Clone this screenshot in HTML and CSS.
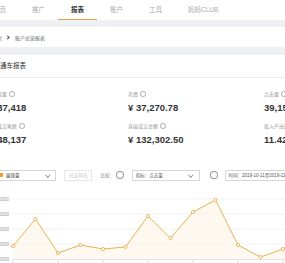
FILE: index.html
```html
<!DOCTYPE html>
<html lang="zh-CN">
<head>
    <meta charset="UTF-8">
    <title>直通车报表</title>
    <link rel="stylesheet" href="styles.css">
</head>
<body>
    <div class="nav">
        <ul class="nav-list">
            <li class="nav-item">首页</li>
            <li class="nav-item">推广</li>
            <li class="nav-item active">报表</li>
            <li class="nav-item">账户</li>
            <li class="nav-item">工具</li>
            <li class="nav-item">妈妈CLUB</li>
        </ul>
    </div>

    <div class="crumb">
        <div class="crumb-inner">
            <span class="crumb-home">首页</span>
            <span class="crumb-arrow"></span>
            <span class="crumb-cur">账户总览报表</span>
        </div>
    </div>

    <div class="card">
        <div class="card-title"><span>直通车报表</span></div>
        <div class="card-body">
            <div class="metrics">
                <div class="metric">
                    <div class="m-label">展现量<i class="tip"></i></div>
                    <div class="m-value">137,418</div>
                </div>
                <div class="metric">
                    <div class="m-label">花费<i class="tip"></i></div>
                    <div class="m-value">¥ 37,270.78</div>
                </div>
                <div class="metric">
                    <div class="m-label">点击量<i class="tip"></i></div>
                    <div class="m-value">39,158</div>
                </div>
                <div class="metric">
                    <div class="m-label">总成交笔数<i class="tip"></i></div>
                    <div class="m-value">148,137</div>
                </div>
                <div class="metric">
                    <div class="m-label">直接成交金额<i class="tip"></i></div>
                    <div class="m-value">¥ 132,302.50</div>
                </div>
                <div class="metric">
                    <div class="m-label">投入产出比<i class="tip"></i></div>
                    <div class="m-value">11.42</div>
                </div>
            </div>

            <div class="controls">
                <div class="select sel-metric">
                    <span class="dot"></span>
                    <span class="sel-text">展现量</span>
                    <span class="caret"></span>
                </div>
                <div class="btn">过去30天</div>
                <span class="ctl-label">比较：</span>
                <span class="radio"></span>
                <div class="select sel-index">
                    <span class="sel-text">指标：点击量</span>
                    <span class="caret"></span>
                </div>
                <span class="radio radio-2"></span>
                <div class="select sel-date">
                    <span class="sel-text">时间：2019-10-11至2019-11-09</span>
                </div>
            </div>

            <svg class="chart" width="320" height="75" viewBox="-8 188 320 75">
                <g class="grid">
                    <line x1="12" y1="198" x2="320" y2="198" />
                    <line x1="12" y1="213" x2="320" y2="213" />
                    <line x1="12" y1="228" x2="320" y2="228" />
                    <line x1="12" y1="243" x2="320" y2="243" />
                    <line x1="12" y1="258.5" x2="320" y2="258.5" class="axis" />
                </g>
                <g class="ticks">
                    <line x1="13" y1="259" x2="13" y2="263" />
                    <line x1="58" y1="259" x2="58" y2="263" />
                    <line x1="103" y1="259" x2="103" y2="263" />
                    <line x1="148" y1="259" x2="148" y2="263" />
                    <line x1="193" y1="259" x2="193" y2="263" />
                    <line x1="238" y1="259" x2="238" y2="263" />
                    <line x1="283" y1="259" x2="283" y2="263" />
                </g>
                <g class="ylabels">
                    <text x="9" y="199.6">50000</text>
                    <text x="9" y="214.6">40000</text>
                    <text x="9" y="229.6">30000</text>
                    <text x="9" y="244.6">20000</text>
                    <text x="9" y="260">10000</text>
                </g>
                <polygon class="area" points="13,258 13,245 35.5,218 58,252 80.5,244 103,248 125.5,246 148,215 170.5,237 193,211 215.5,199 238,244 260.5,256 283,248 305.5,236 305.5,258" />
                <polyline class="line" points="13,245 35.5,218 58,252 80.5,244 103,248 125.5,246 148,215 170.5,237 193,211 215.5,199 238,244 260.5,256 283,248 305.5,236" />
                <g class="pts">
                    <circle cx="13" cy="245" r="1.6" />
                    <circle cx="35.5" cy="218" r="1.6" />
                    <circle cx="58" cy="252" r="1.6" />
                    <circle cx="80.5" cy="244" r="1.6" />
                    <circle cx="103" cy="248" r="1.6" />
                    <circle cx="125.5" cy="246" r="1.6" />
                    <circle cx="148" cy="215" r="1.6" />
                    <circle cx="170.5" cy="237" r="1.6" />
                    <circle cx="193" cy="211" r="1.6" />
                    <circle cx="215.5" cy="199" r="1.6" />
                    <circle cx="238" cy="244" r="1.6" />
                    <circle cx="260.5" cy="256" r="1.6" />
                    <circle cx="283" cy="248" r="1.6" />
                </g>
            </svg>
        </div>
    </div>
</body>
</html>
```

FILE: styles.css
```css
html,
body,
ul,
li {
    padding: 0;
    margin: 0;
}

html,
body {
    width: 285px;
    height: 263px;
    overflow: hidden;
}

body {
    background-color: #eef0f4;
    font-family: "Liberation Sans", "Noto Sans CJK SC", sans-serif;
    color: #333;
}

ul {
    list-style: none;
}

/* 顶部导航 */
.nav {
    height: 20px;
    background-color: #fff;
}

.nav-list {
    display: flex;
    margin-left: -20px;
}

.nav-item {
    height: 20px;
    line-height: 19px;
    padding: 0 13px;
    box-sizing: border-box;
    font-size: 6.5px;
    color: #aaa;
    white-space: nowrap;
}

.nav-item.active {
    color: #333;
    font-weight: bold;
    border-bottom: 1px solid #eda23a;
}

/* 面包屑 */
.crumb {
    margin-top: 7px;
    height: 20px;
    background-color: #fff;
    display: flex;
    align-items: center;
}

.crumb-inner {
    margin-left: -8px;
    display: flex;
    align-items: center;
    font-size: 5px;
    color: #666;
}

.crumb-arrow {
    width: 2px;
    height: 2px;
    border-top: 1px solid #444;
    border-right: 1px solid #444;
    transform: rotate(45deg);
    margin: 0 6px 0 4px;
}

/* 报表卡片 */
.card {
    margin-top: 8px;
    height: 208px;
    background-color: #fff;
}

.card-title {
    height: 22px;
    line-height: 22px;
    border-bottom: 1px solid #ececec;
    font-size: 6.5px;
    color: #333;
}

.card-title > span {
    margin-left: -6.5px;
}

.card-body {
    margin-left: -8px;
    width: 320px;
}

.metrics {
    display: grid;
    grid-template-columns: repeat(3, 136px);
    row-gap: 7px;
    padding-top: 12px;
}

.m-label {
    height: 8px;
    line-height: 8px;
    font-size: 5px;
    color: #9a9a9a;
    display: flex;
    align-items: center;
    white-space: nowrap;
}

.tip {
    display: inline-block;
    width: 3.5px;
    height: 3.5px;
    border: 0.6px solid #aaa;
    border-radius: 50%;
    margin-left: 2px;
}

.m-value {
    margin-top: 3px;
    height: 14px;
    line-height: 14px;
    font-size: 9.5px;
    font-weight: bold;
    color: #333;
    white-space: nowrap;
}

/* 筛选条 */
.controls {
    display: flex;
    align-items: center;
    margin-top: 22px;
    height: 12px;
    font-size: 4.5px;
    color: #666;
    white-space: nowrap;
}

.select {
    height: 11px;
    border: 1px solid #d6d6d6;
    box-sizing: border-box;
    display: flex;
    align-items: center;
    position: relative;
}

.sel-metric {
    width: 63px;
    margin-left: 3px;
}

.dot {
    width: 3px;
    height: 4px;
    background-color: #f39b2a;
    margin-left: 4px;
}

.sel-metric .sel-text {
    margin-left: 3px;
    color: #444;
}

.caret {
    position: absolute;
    right: 6px;
    top: 2.5px;
    width: 2.5px;
    height: 2.5px;
    border-right: 0.7px solid #999;
    border-bottom: 0.7px solid #999;
    transform: rotate(45deg);
}

.btn {
    width: 29px;
    height: 11px;
    margin-left: 8px;
    border: 1px solid #e6e6e6;
    box-sizing: border-box;
    text-align: center;
    line-height: 9px;
    color: #bbb;
}

.ctl-label {
    margin-left: 8px;
    color: #777;
}

.radio {
    width: 6px;
    height: 6px;
    border: 0.7px solid #999;
    border-radius: 50%;
    margin-left: 2px;
}

.sel-index {
    width: 70px;
    margin-left: 8px;
}

.sel-index .sel-text,
.sel-date .sel-text {
    margin-left: 3px;
    color: #555;
}

.radio-2 {
    margin-left: 10px;
}

.sel-date {
    width: 90px;
    margin-left: 7px;
    border-radius: 1px;
}

/* 折线图 */
.chart {
    display: block;
    margin-top: 8px;
}

.grid line {
    stroke: #ececec;
    stroke-width: 0.7;
}

.grid line.axis {
    stroke: #dcdcdc;
}

.ticks line {
    stroke: #cfcfcf;
    stroke-width: 0.7;
}

.ylabels text {
    font-size: 4.5px;
    fill: #999;
    text-anchor: end;
}

.area {
    fill: #fdf6ea;
    opacity: 0.7;
}

.line {
    fill: none;
    stroke: #e4a940;
    stroke-width: 0.9;
}

.pts circle {
    fill: #fff;
    stroke: #e4a940;
    stroke-width: 0.8;
}
```
